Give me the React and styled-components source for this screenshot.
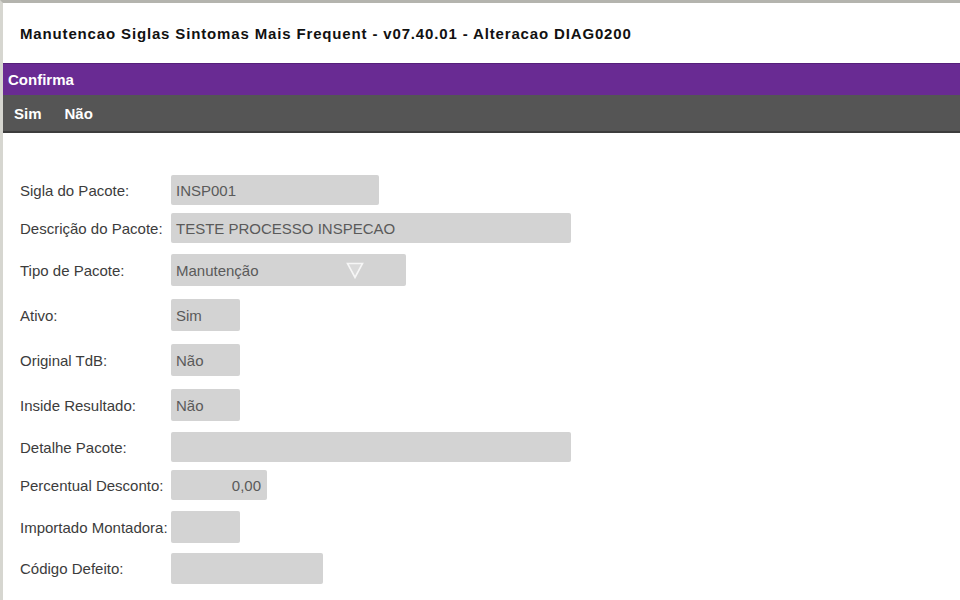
import React from 'react';
import styled, { createGlobalStyle } from 'styled-components';

const GlobalStyle = createGlobalStyle`
  html, body { margin: 0; padding: 0; background: #fff; }
  body { font-family: "Liberation Sans", Arial, sans-serif; }
`;

const Frame = styled.div`
  width: 960px;
  height: 600px;
  box-sizing: border-box;
  border-top: 3px solid #b4b4ae;
  border-left: 3px solid #d6d6d0;
  overflow: hidden;
  background: #fff;
`;

const TitleBar = styled.div`
  height: 60px;
  display: flex;
  align-items: center;
  padding-left: 17px;
  padding-top: 1px;
  box-sizing: border-box;
  font-size: 15px;
  font-weight: bold;
  letter-spacing: 0.85px;
  color: #111;
`;

const MenuTitle = styled.div`
  height: 31px;
  background: #692b93;
  border-top: 1px solid #55207a;
  display: flex;
  align-items: center;
  padding-left: 5px;
  color: #fff;
  font-weight: bold;
  font-size: 15px;
`;

const ActionBar = styled.div`
  height: 36px;
  background: #555555;
  border-bottom: 2px solid #3c3c3c;
  display: flex;
  align-items: center;
  gap: 23px;
  padding-left: 11px;
  color: #fff;
  font-weight: bold;
  font-size: 15px;
`;

const Form = styled.div`
  padding: 42px 0 0 17px;
`;

const Row = styled.div`
  display: flex;
  align-items: center;
  margin-top: ${p => p.$mt || 0}px;
`;

const Label = styled.div`
  width: 151px;
  flex: none;
  font-size: 15px;
  color: #3c3c3c;
  white-space: nowrap;
`;

const Field = styled.div`
  width: ${p => p.$w}px;
  height: ${p => p.$h || 30}px;
  background: #d3d3d3;
  border-radius: 2px;
  box-sizing: border-box;
  display: flex;
  align-items: center;
  justify-content: ${p => (p.$right ? 'flex-end' : 'flex-start')};
  padding: 0 6px 0 5px;
  font-size: 15px;
  color: #5a5a5a;
  position: relative;
`;

const Arrow = styled.svg`
  position: absolute;
  left: 175px;
  top: 8px;
`;

const fields = [
  { label: 'Sigla do Pacote:', w: 208, h: 30, mt: 0, value: 'INSP001' },
  { label: 'Descrição do Pacote:', w: 400, h: 30, mt: 8, value: 'TESTE PROCESSO INSPECAO' },
  { label: 'Tipo de Pacote:', w: 235, h: 32, mt: 11, value: 'Manutenção', select: true },
  { label: 'Ativo:', w: 69, h: 32, mt: 13, value: 'Sim' },
  { label: 'Original TdB:', w: 69, h: 32, mt: 13, value: 'Não' },
  { label: 'Inside Resultado:', w: 69, h: 32, mt: 13, value: 'Não' },
  { label: 'Detalhe Pacote:', w: 400, h: 30, mt: 11, value: '' },
  { label: 'Percentual Desconto:', w: 96, h: 30, mt: 8, value: '0,00', right: true },
  { label: 'Importado Montadora:', w: 69, h: 32, mt: 11, value: '' },
  { label: 'Código Defeito:', w: 152, h: 31, mt: 10, value: '' },
];

export default function App() {
  return (
    <>
      <GlobalStyle />
      <Frame>
        <TitleBar>Manutencao Siglas Sintomas Mais Frequent - v07.40.01 - Alteracao DIAG0200</TitleBar>
        <MenuTitle>Confirma</MenuTitle>
        <ActionBar>
          <span>Sim</span>
          <span>Não</span>
        </ActionBar>
        <Form>
          {fields.map(f => (
            <Row key={f.label} $mt={f.mt}>
              <Label>{f.label}</Label>
              <Field $w={f.w} $h={f.h} $right={f.right}>
                {f.value}
                {f.select && (
                  <Arrow width="18" height="17" viewBox="0 0 18 17">
                    <polygon points="1.5,1.5 16.5,1.5 9,15.5" fill="#dadada" stroke="#f6f6f6" strokeWidth="1.6" />
                  </Arrow>
                )}
              </Field>
            </Row>
          ))}
        </Form>
      </Frame>
    </>
  );
}
